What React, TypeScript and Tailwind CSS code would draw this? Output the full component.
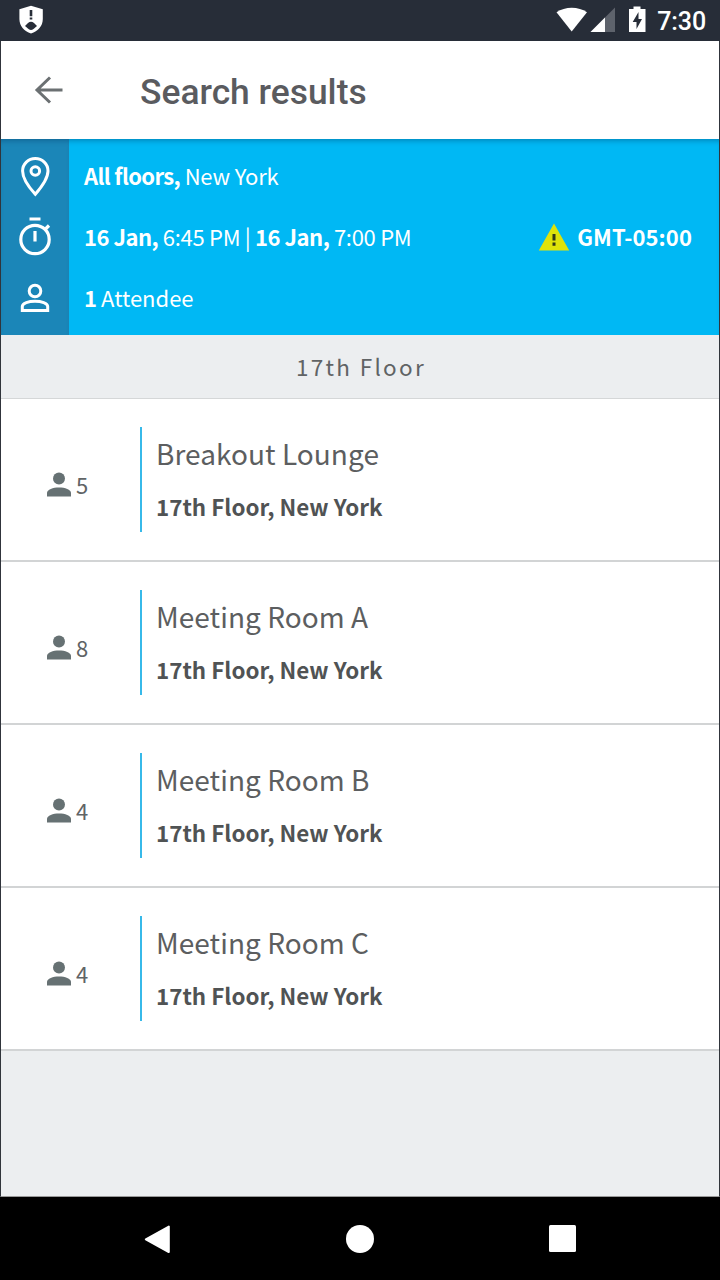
import React from 'react';

const rooms = [
  { name: 'Breakout Lounge', seats: 5 },
  { name: 'Meeting Room A', seats: 8 },
  { name: 'Meeting Room B', seats: 4 },
  { name: 'Meeting Room C', seats: 4 },
];

function StatusBar() {
  return (
    <div className="flex h-[41px] shrink-0 items-start justify-between bg-[#272d38] pr-[14px] pl-[18px] text-white">
      <svg className="mt-[5px]" width="26" height="30" viewBox="0 0 26 30">
        <path d="M13 0.8 L24.800 4.300 V14 C24.800 21 20 26.300 13 28.500 C6 26.300 1.400 21 1.400 14 V4.300 Z" fill="currentColor" />
        <path d="M13 5v6.300M13 12.400v2" stroke="#272d38" strokeWidth="2.600" />
        <path d="M7 21 L10 18 Q13 15.500 16 18 L19 21 L15.500 24 Q13 26 10.500 24 Z" fill="#272d38" />
      </svg>
      <div className="flex items-start">
        <svg className="mt-[5px]" width="92" height="30" viewBox="0 0 92 30">
          <path d="M0.500 7.300 C9 1.200 22.500 1.200 31 7.300 L15.700 26.500 Z" fill="currentColor" />
          <path d="M59 2.500 V27 H34.500 Z" fill="#5e636c" />
          <path d="M49 12.500 V27 H34.500 Z" fill="currentColor" />
          <path d="M77.500 1.500 H84.500 V4 H89.500 V27 H73 V4 H77.500 Z" fill="currentColor" />
          <path d="M82.500 7 L76.700 17 H80.500 V24 L86 14 H82.500 Z" fill="#272d38" />
        </svg>
        <span className="ml-[9px] mt-[6px] font-['Roboto',sans-serif] text-[25px] leading-[32px] font-medium tracking-[-0.1px]">7:30</span>
      </div>
    </div>
  );
}

function AppBar() {
  return (
    <div className="flex h-[98px] shrink-0 items-center bg-white pl-[32px]">
      <svg width="30" height="28" viewBox="0 0 30 28" fill="none" stroke="#6b7072" strokeWidth="3">
        <path d="M29.500 14H4M17 1.500L4 14L17 26.500" />
      </svg>
      <h1 className="mt-[3px] ml-[77px] font-['Roboto',sans-serif] text-[35.4px] leading-[42px] font-medium text-[#5a5b5f]">
        Search results
      </h1>
    </div>
  );
}

function Summary() {
  return (
    <div className="flex h-[196px] shrink-0 bg-[#00b8f4] text-[22px] leading-[32px] text-white shadow-[inset_0_5px_5px_-3px_rgba(0,50,90,0.35)]">
      <div className="flex w-[68px] flex-col items-center bg-[#1b86b8] pr-px shadow-[inset_0_5px_5px_-3px_rgba(0,50,90,0.35)]">
        <svg className="mt-[17px] shrink-0" width="32" height="42" viewBox="0 0 32 42" fill="none" stroke="#fff" strokeWidth="3">
          <path d="M16.300 38.300 C11 32.500 3.600 23 3.600 15 C3.600 8 9.300 2.500 16.300 2.500 S29 8 29 15 C29 23 21.300 32.500 16.300 38.300 Z" />
          <circle cx="16.300" cy="15" r="4.300" />
        </svg>
        <svg className="mt-[18px] shrink-0" width="34" height="40" viewBox="0 0 34 40" fill="none" stroke="#fff" strokeWidth="3.200">
          <circle cx="17" cy="23.500" r="14.200" />
          <path d="M11.500 3H22.500M17 15V25.500M27 13.500L31 9.500" />
        </svg>
        <svg className="mt-[26px] shrink-0" width="30" height="32" viewBox="0 0 30 32" fill="none" stroke="#fff" strokeWidth="3">
          <circle cx="15" cy="9" r="5.800" />
          <path d="M2.300 28.500 V24.500 C2.300 17.500 27.700 17.500 27.700 24.500 V28.500 Z" />
        </svg>
      </div>
      <div className="flex flex-1 flex-col pl-[15px]">
        <div className="flex h-[71px] items-center">
          <p className="tracking-[-0.2px]"><b className="tracking-[-0.65px]">All floors,</b> New York</p>
        </div>
        <div className="flex h-[51px] items-center pr-[27px]">
          <p className="tracking-[-0.3px]"><b className="tracking-[-0.5px]">16 Jan,</b> 6:45 PM | <b className="tracking-[-0.5px]">16 Jan,</b> 7:00 PM</p>
          <svg className="mt-[2px] ml-auto" width="32" height="28" viewBox="0 0 32 28">
            <path d="M16 .5 L31.200 27.500 H.8 Z" fill="#dfe30a" />
            <path d="M16 11v6.500M16 19.500v3.300" stroke="#33391a" strokeWidth="3" />
          </svg>
          <b className="ml-[7px] tracking-[0.1px]">GMT-05:00</b>
        </div>
        <div className="flex h-[71px] items-center">
          <p><b className="tracking-[-0.8px]">1</b> Attendee</p>
        </div>
      </div>
    </div>
  );
}

function RoomRow({ name, seats }: { name: string; seats: number }) {
  return (
    <li className="flex h-[163px] shrink-0 items-center border-b-2 border-[#d2d4d5] bg-white">
      <div className="mt-[10px] flex w-[139px] items-center pl-[46px] text-[#606466]">
        <svg width="24" height="26" viewBox="0 0 24 26" fill="#667173">
          <circle cx="12" cy="6.500" r="6" />
          <path d="M0 24.500 V21 C0 13.500 24 13.500 24 21 V24.500 Z" />
        </svg>
        <span className="-mt-[2px] ml-[5px] text-[22px] leading-[30px]">{seats}</span>
      </div>
      <div className="flex h-[105px] flex-col border-l-2 border-[#37b9e9] pl-[14px] text-[#505354]">
        <h3 className="mt-[4px] text-[28px] leading-[44px] tracking-[0.05px] text-[#5c5e60]">{name}</h3>
        <p className="mt-[14px] text-[22.4px] leading-[34px] font-bold">17th Floor, New York</p>
      </div>
    </li>
  );
}

function NavBar() {
  return (
    <div className="flex h-[83px] shrink-0 items-center justify-between bg-black pr-[144px] pl-[144px]">
      <svg width="27" height="30" viewBox="0 0 27 30" fill="#fff" stroke="#fff" strokeWidth="2" strokeLinejoin="round">
        <path d="M1.800 15.300 L24.800 2.500 V28 Z" />
      </svg>
      <div className="mt-px size-[28px] rounded-full bg-white" />
      <div className="size-[27px] rounded-[1.5px] bg-white" />
    </div>
  );
}

export default function App() {
  return (
    <div className="flex h-[1280px] w-[720px] flex-col overflow-hidden bg-[#eceef0] font-['Noto_Sans_CJK_SC',sans-serif]">
      <StatusBar />
      <div className="flex flex-1 flex-col border-x border-b border-x-[#30343b] border-b-[#999]">
        <AppBar />
        <Summary />
        <h2 className="flex h-[64px] shrink-0 items-center justify-center border-b border-[#d5d7d8] pl-[2px] text-[22.5px] tracking-[2.3px] text-[#606365]">
          17th Floor
        </h2>
        <ul className="flex flex-col">
          {rooms.map((room) => (
            <RoomRow key={room.name} {...room} />
          ))}
        </ul>
      </div>
      <NavBar />
    </div>
  );
}
